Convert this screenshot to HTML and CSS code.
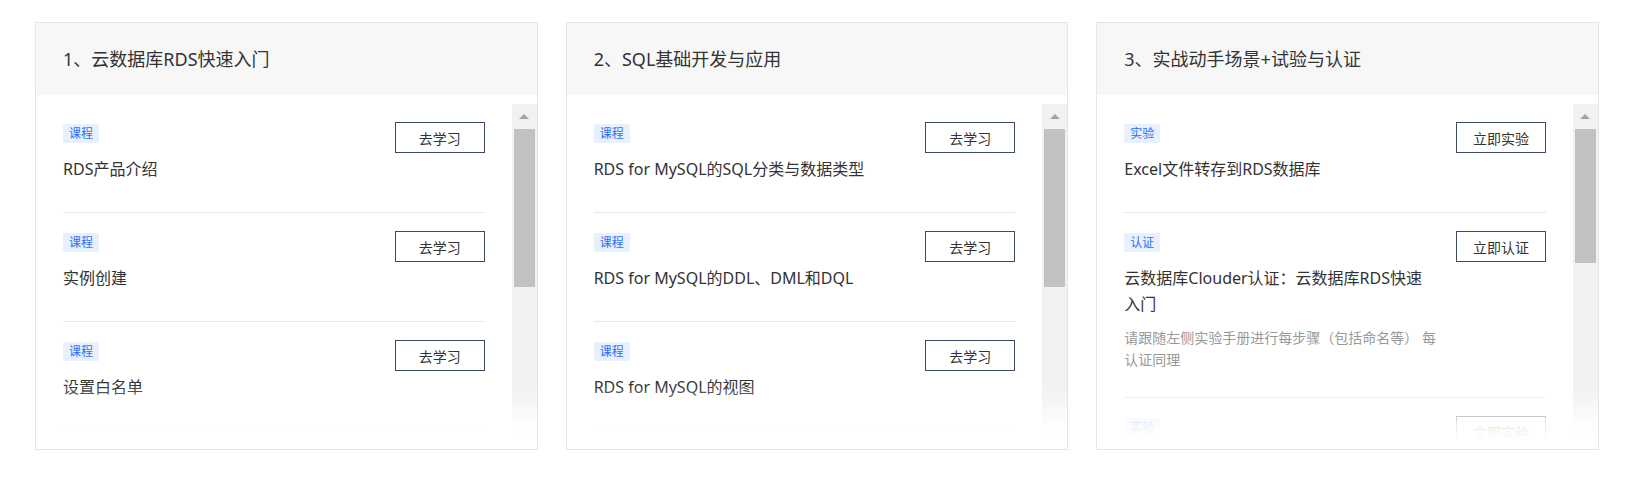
FILE: index.html
```html
<!DOCTYPE html>
<html lang="zh-CN">
<head>
<meta charset="utf-8">
<title>RDS 学习路径</title>
<link rel="stylesheet" href="styles.css">
</head>
<body>
<div class="page">
  <section class="card">
    <div class="card-head">1、云数据库RDS快速入门</div>
    <div class="card-body">
      <div class="list-wrap">
        <ul class="list">
          <li class="item">
            <div class="item-main"><span class="tag">课程</span><div class="item-title">RDS产品介绍</div></div>
            <button class="btn">去学习</button>
          </li>
          <li class="item">
            <div class="item-main"><span class="tag">课程</span><div class="item-title">实例创建</div></div>
            <button class="btn">去学习</button>
          </li>
          <li class="item">
            <div class="item-main"><span class="tag">课程</span><div class="item-title">设置白名单</div></div>
            <button class="btn">去学习</button>
          </li>
        </ul>
        <div class="scrollbar"><div class="sb-arrow"></div><div class="sb-thumb"></div></div>
      </div>
      <div class="fade"></div>
    </div>
  </section>

  <section class="card">
    <div class="card-head">2、SQL基础开发与应用</div>
    <div class="card-body">
      <div class="list-wrap">
        <ul class="list">
          <li class="item">
            <div class="item-main"><span class="tag">课程</span><div class="item-title">RDS for MySQL的SQL分类与数据类型</div></div>
            <button class="btn">去学习</button>
          </li>
          <li class="item">
            <div class="item-main"><span class="tag">课程</span><div class="item-title">RDS for MySQL的DDL、DML和DQL</div></div>
            <button class="btn">去学习</button>
          </li>
          <li class="item">
            <div class="item-main"><span class="tag">课程</span><div class="item-title">RDS for MySQL的视图</div></div>
            <button class="btn">去学习</button>
          </li>
        </ul>
        <div class="scrollbar"><div class="sb-arrow"></div><div class="sb-thumb"></div></div>
      </div>
      <div class="fade"></div>
    </div>
  </section>

  <section class="card">
    <div class="card-head">3、实战动手场景+试验与认证</div>
    <div class="card-body">
      <div class="list-wrap">
        <ul class="list">
          <li class="item">
            <div class="item-main"><span class="tag">实验</span><div class="item-title">Excel文件转存到RDS数据库</div></div>
            <button class="btn">立即实验</button>
          </li>
          <li class="item">
            <div class="item-main"><span class="tag">认证</span><div class="item-title">云数据库Clouder认证：云数据库RDS快速入门</div><div class="item-desc">请跟随左侧实验手册进行每步骤（包括命名等） 每认证同理</div></div>
            <button class="btn">立即认证</button>
          </li>
          <li class="item">
            <div class="item-main"><span class="tag">实验</span></div>
            <button class="btn">立即实验</button>
          </li>
        </ul>
        <div class="scrollbar"><div class="sb-arrow"></div><div class="sb-thumb sb-thumb-short"></div></div>
      </div>
      <div class="fade"></div>
    </div>
  </section>
</div>
</body>
</html>
```

FILE: styles.css
```css
* {
  box-sizing: border-box;
}

html, body {
  margin: 0;
  padding: 0;
  background: #fff;
}

body {
  font-family: "Noto Sans", "Noto Sans CJK SC", sans-serif;
  color: #333;
}

.page {
  display: grid;
  grid-template-columns: repeat(3, 1fr);
  column-gap: 28px;
  padding: 22px 39px 0 35px;
}

.card {
  border: 1px solid #e5e5e5;
  background: #fff;
  height: 428px;
  display: flex;
  flex-direction: column;
}

.card-head {
  height: 72px;
  line-height: 72px;
  padding-left: 27px;
  background: #f7f7f7;
  font-size: 18px;
  color: #333;
  flex: none;
}

.card-body {
  position: relative;
  flex: 1;
  padding: 9px 0 9px;
}

.list-wrap {
  display: flex;
  height: 336px;
  overflow: hidden;
}

.list {
  list-style: none;
  margin: 0;
  padding: 0 27px;
  flex: 1;
  min-width: 0;
  overflow: hidden;
}

.item {
  display: flex;
  justify-content: space-between;
  align-items: flex-start;
  padding: 18px 0 26px;
  min-height: 109px;
  border-bottom: 1px solid #e9e9e9;
}

.item-main {
  width: 312px;
  padding-top: 2px;
}

.tag {
  display: inline-block;
  height: 19px;
  line-height: 19px;
  padding: 0 6px;
  font-size: 12px;
  color: #2d6ff5;
  background: #e8f0fe;
  border-radius: 2px;
  vertical-align: top;
}

.item-title {
  margin-top: 10px;
  font-size: 16px;
  line-height: 26px;
  color: #333;
}

.item-desc {
  margin-top: 10px;
  font-size: 14px;
  line-height: 22px;
  color: #999;
}

.btn {
  flex: none;
  width: 90px;
  height: 31px;
  padding: 0;
  border: 1px solid #3d4a63;
  border-radius: 0;
  background: #fff;
  font-family: inherit;
  font-size: 14px;
  color: #333;
}

.scrollbar {
  flex: none;
  width: 25px;
  background: #f1f1f1;
  display: flex;
  flex-direction: column;
  align-items: center;
}

.sb-arrow {
  height: 25px;
  width: 100%;
  display: flex;
  justify-content: center;
  padding-top: 10px;
}

.sb-arrow::before {
  content: "";
  width: 0;
  height: 0;
  border-left: 5px solid transparent;
  border-right: 5px solid transparent;
  border-bottom: 5px solid #a3a3a3;
}

.sb-thumb {
  width: 21px;
  height: 158px;
  background: #c1c1c1;
}

.sb-thumb-short {
  height: 134px;
}

.fade {
  position: absolute;
  left: 0;
  right: 0;
  bottom: 0;
  height: 64px;
  background: linear-gradient(to bottom, rgba(255, 255, 255, 0) 0%, rgba(255, 255, 255, 0.85) 60%, #fff 86%);
  pointer-events: none;
}
```
